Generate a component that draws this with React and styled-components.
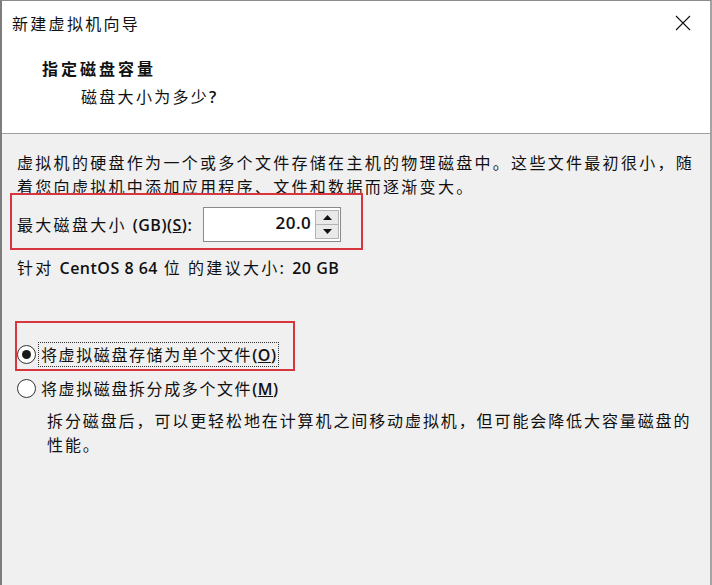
import styled, { createGlobalStyle } from "styled-components";

const GlobalStyle = createGlobalStyle`
	html, body {
		margin: 0;
		padding: 0;
		background: #f0f0f0;
	}
	* {
		box-sizing: border-box;
	}
`;

const Window = styled.div`
	width: 712px;
	height: 585px;
	display: flex;
	flex-direction: column;
	background: #f0f0f0;
	border-top: 1px solid #8c8c8c;
	border-left: 2px solid #7d7d7d;
	border-right: 2px solid #a3a3a3;
	font-family: "Noto Sans CJK SC", "Liberation Sans", sans-serif;
	font-size: 16px;
	letter-spacing: 2.3px;
	color: #111;
	overflow: hidden;
`;

const Header = styled.div`
	height: 133px;
	flex: none;
	background: #fff;
	border-bottom: 1px solid #a0a0a0;
	display: flex;
	flex-direction: column;
`;

const TitleRow = styled.div`
	height: 44px;
	display: flex;
	align-items: center;
	justify-content: space-between;
	padding: 0 17px 0 10px;
	line-height: 24px;
`;

const CloseButton = styled.button`
	width: 20px;
	height: 20px;
	padding: 0;
	border: none;
	background: transparent;
	display: flex;
	align-items: center;
	justify-content: center;
`;

const Heading = styled.div`
	margin: 11px 0 0 40px;
	line-height: 24px;
	font-weight: 700;
	letter-spacing: 3px;
`;

const SubHeading = styled.div`
	margin: 4px 0 0 79px;
	line-height: 24px;
`;

const Body = styled.div`
	flex: 1;
	padding: 16px 0 0 15px;
	display: flex;
	flex-direction: column;
	align-items: flex-start;
	line-height: 24px;
`;

const Text = styled.div`
	white-space: nowrap;
	margin-top: ${(p) => p.$top || 0}px;
	margin-left: ${(p) => p.$left || 0}px;
	letter-spacing: ${(p) => p.$spacing || 2.3}px;
`;

const Latin = styled.span`
	font-family: "Open Sans", sans-serif;
	font-weight: 600;
	font-size: 16px;
	letter-spacing: 0.5px;
`;

const Highlight = styled.div`
	border: 2px solid #d8363f;
	display: flex;
	flex-direction: column;
	margin-top: ${(p) => p.$top}px;
	margin-left: ${(p) => p.$left}px;
	width: ${(p) => p.$width}px;
	padding: ${(p) => p.$pad};
`;

const SizeRow = styled.div`
	display: flex;
	align-items: center;
	gap: 11px;
`;

const SpinBox = styled.div`
	width: 138px;
	height: 35px;
	border: 1px solid #8a8a8a;
	background: #fff;
	display: flex;
	align-items: stretch;
	padding: 1px 0;
`;

const SpinValue = styled.div`
	flex: 1;
	padding: 0 4px 3px 0;
	display: flex;
	align-items: center;
	justify-content: flex-end;
	font-family: "Open Sans", sans-serif;
	font-weight: 600;
	font-size: 17px;
	letter-spacing: 0.5px;
`;

const SpinButtons = styled.div`
	width: 24px;
	display: flex;
	flex-direction: column;
	margin: 1px 1px 1px 0;
`;

const SpinArrow = styled.div`
	flex: 1;
	background: #e9e9e9;
	border: 1px solid #b4b4b4;
	display: flex;
	align-items: center;
	justify-content: center;
	& + & {
		border-top: none;
	}
`;

const RadioRow = styled.label`
	display: flex;
	align-items: center;
	gap: 3px;
	height: 24px;
	margin-top: ${(p) => p.$top || 0}px;
`;

const RadioCircle = styled.span`
	width: 19px;
	height: 19px;
	flex: none;
	border-radius: 50%;
	border: 1px solid #333;
	background: #fff;
	display: flex;
	align-items: center;
	justify-content: center;
	&::after {
		content: "";
		width: 9px;
		height: 9px;
		border-radius: 50%;
		background: #1a1a1a;
		display: ${(p) => (p.$checked ? "block" : "none")};
	}
`;

const RadioLabel = styled.span`
	white-space: nowrap;
	padding: 0 2px;
	outline: ${(p) => (p.$focused ? "1px dotted #333" : "none")};
	line-height: 22px;
	letter-spacing: 1.6px;
`;

function Triangle({ up }) {
	return (
		<svg width="9" height="5" viewBox="0 0 9 5">
			<path d={up ? "M0 5 L4.5 0 L9 5 Z" : "M0 0 L4.5 5 L9 0 Z"} fill="#111" />
		</svg>
	);
}

function Radio({ checked, focused, top, children }) {
	return (
		<RadioRow $top={top}>
			<RadioCircle $checked={checked} />
			<RadioLabel $focused={focused}>{children}</RadioLabel>
		</RadioRow>
	);
}

export default function App() {
	return (
		<>
			<GlobalStyle />
			<Window>
				<Header>
					<TitleRow>
						<span>新建虚拟机向导</span>
						<CloseButton aria-label="关闭">
							<svg width="16" height="16" viewBox="0 0 16 16">
								<path d="M1 1 L15 15 M15 1 L1 15" stroke="#111" strokeWidth="1.1" />
							</svg>
						</CloseButton>
					</TitleRow>
					<Heading>指定磁盘容量</Heading>
					<SubHeading>磁盘大小为多少<Latin>?</Latin></SubHeading>
				</Header>

				<Body>
					<Text>
						虚拟机的硬盘作为一个或多个文件存储在主机的物理磁盘中。这些文件最初很小，随
						<br />
						着您向虚拟机中添加应用程序、文件和数据而逐渐变大。
					</Text>

					<Highlight $top={-5} $left={-7} $width={353} $pad="12px 0 6px 5px">
						<SizeRow>
							<span>
								最大磁盘大小 <Latin>(GB)(<u>S</u>):</Latin>
							</span>
							<SpinBox>
								<SpinValue>20.0</SpinValue>
								<SpinButtons>
									<SpinArrow>
										<Triangle up />
									</SpinArrow>
									<SpinArrow>
										<Triangle />
									</SpinArrow>
								</SpinButtons>
							</SpinBox>
						</SizeRow>
					</Highlight>

					<Text $top={5}>
						针对 <Latin>CentOS 8 64</Latin> 位 的建议大小: <Latin>20 GB</Latin>
					</Text>

					<Highlight $top={41} $left={-2} $width={280} $pad="19px 0 3px 0">
						<Radio checked focused>
							将虚拟磁盘存储为单个文件<Latin>(<u>O</u>)</Latin>
						</Radio>
					</Highlight>

					<Radio top={5}>
						将虚拟磁盘拆分成多个文件<Latin>(<u>M</u>)</Latin>
					</Radio>

					<Text $top={8} $left={30} $spacing={1.9}>
						拆分磁盘后，可以更轻松地在计算机之间移动虚拟机，但可能会降低大容量磁盘的
						<br />
						性能。
					</Text>
				</Body>
			</Window>
		</>
	);
}
